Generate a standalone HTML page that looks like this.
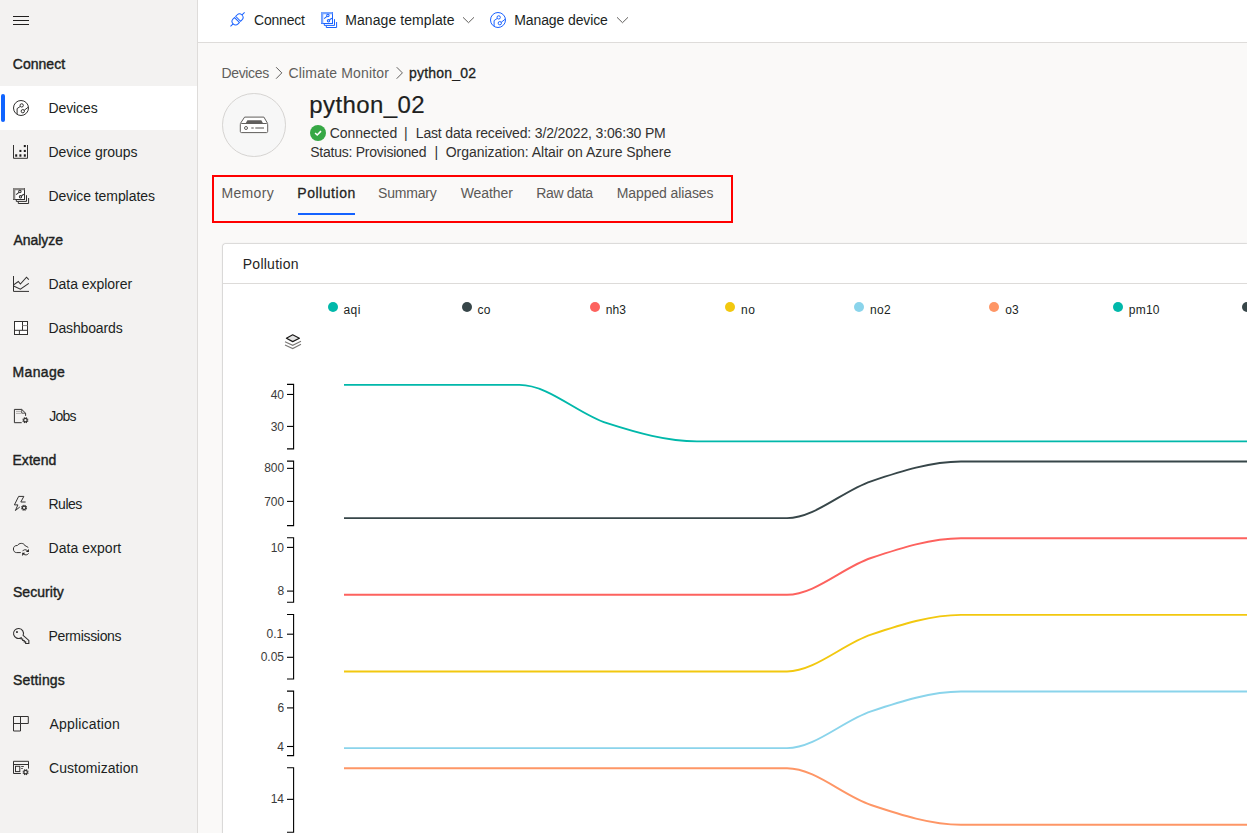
<!DOCTYPE html><html lang="en"><head><meta charset="utf-8"><title>python_02 - Pollution</title><style>

html,body{margin:0;padding:0}
html{width:1247px;height:833px;overflow:hidden}
body{width:1247px;height:833px;overflow:hidden;position:relative;background:#faf9f8;font-family:"Liberation Sans",sans-serif;color:#201f1e}
.abs{position:absolute}
.t{position:absolute;white-space:nowrap;line-height:20px;height:20px}
#side{position:absolute;left:0;top:0;width:197px;height:833px;background:#f3f2f1;border-right:1px solid #dedcda}
#top{position:absolute;left:198px;top:0;width:1049px;height:42px;background:#fff;border-bottom:1px solid #dedcda}
.sb{color:#201f1e;-webkit-text-stroke:0.4px #201f1e}
.nav{color:#201f1e}
.cmd{color:#201f1e}
.bc{color:#605e5c}
.bcb{color:#201f1e;-webkit-text-stroke:0.3px #201f1e}
.title{color:#201f1e;-webkit-text-stroke:0.2px #201f1e;line-height:32px;height:32px}
.bar{color:#323130}
.st{color:#323130}
.tab{color:#5a5856}
.tabsel{color:#252423;-webkit-text-stroke:0.28px #252423}
.cardh{color:#252423}
.leg{color:#201f1e}
.tick{color:#3b3a39}
#sel{position:absolute;left:0;top:86px;width:197px;height:44px;background:#fff}
#selbar{position:absolute;left:1px;top:94px;width:4px;height:28px;border-radius:2px;background:#1064ff}
#card{position:absolute;left:223px;top:244px;width:1024px;height:589px;background:#fff;border-radius:2px 0 0 0;box-shadow:0 0 0 .6px rgba(0,0,0,.10),0 .3px 1.8px rgba(0,0,0,.30)}
#cardhr{position:absolute;left:223px;top:283px;width:1024px;height:1px;background:#dddbd9}
#red{position:absolute;left:212px;top:175px;width:517px;height:44px;border:2px solid #ff0000}
#tabul{position:absolute;left:298px;top:213px;width:57px;height:2px;background:#1462ff}
#avatar{position:absolute;left:222.3px;top:93.2px;width:63.6px;height:63.6px;border-radius:50%;background:#f7f7f7;border:1px solid #d6d4d2;box-sizing:border-box}
.dot{position:absolute;width:10px;height:10px;border-radius:50%}
svg{position:absolute;left:0;top:0;overflow:hidden}
.lt{stroke:var(--lt)}

</style></head><body>
<div id="side"></div><div id="sel"></div><div id="selbar"></div><div id="top"></div>
<div id="avatar"></div><div id="red"></div><div id="tabul"></div><div id="card"></div><div id="cardhr"></div>
<div class="dot" style="left:328.0px;top:302.3px;background:#01b8aa"></div>
<div class="dot" style="left:461.7px;top:302.3px;background:#374649"></div>
<div class="dot" style="left:590.1px;top:302.3px;background:#fd625e"></div>
<div class="dot" style="left:725.0px;top:302.3px;background:#f2c80f"></div>
<div class="dot" style="left:853.9px;top:302.3px;background:#8ad4eb"></div>
<div class="dot" style="left:988.9px;top:302.3px;background:#fe9666"></div>
<div class="dot" style="left:1113.0px;top:302.3px;background:#01b8aa"></div>
<div class="dot" style="left:1242px;top:302.3px;width:5px;border-radius:5px 0 0 5px;background:#374649"></div>
<svg id="chart" width="1247" height="833" viewBox="0 0 1247 833">
<g fill="none" stroke="#000" stroke-width="1.1">
<path d="M287,384.40H293.6V448.90H287"/>
<path d="M287,394.45H293.6"/>
<path d="M287,426.40H293.6"/>
<path d="M287,461.08H293.6V525.58H287"/>
<path d="M287,468.35H293.6"/>
<path d="M287,501.40H293.6"/>
<path d="M287,537.76H293.6V602.26H287"/>
<path d="M287,547.40H293.6"/>
<path d="M287,591.10H293.6"/>
<path d="M287,614.44H293.6V678.94H287"/>
<path d="M287,634.20H293.6"/>
<path d="M287,657.30H293.6"/>
<path d="M287,691.12H293.6V755.62H287"/>
<path d="M287,707.90H293.6"/>
<path d="M287,746.50H293.6"/>
<path d="M287,767.80H293.6V832.30H287"/>
<path d="M287,799.35H293.6"/>
</g><g fill="none" stroke-width="1.9" stroke-linejoin="round">
<path stroke="#01b8aa" d="M344.00,384.85C402.50,384.85,461.00,384.85,519.50,384.85C548.67,384.85,577.83,413.81,607.00,423.20C637.00,432.86,667.00,441.40,697.00,441.40C898.00,441.40,1099.00,441.40,1300.00,441.40"/>
<path stroke="#374649" d="M344.00,518.08C491.67,518.08,639.33,518.08,787.00,518.08C815.00,518.08,843.00,490.63,871.00,481.32C901.00,471.35,931.00,461.53,961.00,461.53C1074.00,461.53,1187.00,461.53,1300.00,461.53"/>
<path stroke="#fd625e" d="M344.00,594.76C491.67,594.76,639.33,594.76,787.00,594.76C815.00,594.76,843.00,567.31,871.00,558.00C901.00,548.03,931.00,538.21,961.00,538.21C1074.00,538.21,1187.00,538.21,1300.00,538.21"/>
<path stroke="#f2c80f" d="M344.00,671.44C491.67,671.44,639.33,671.44,787.00,671.44C815.00,671.44,843.00,643.99,871.00,634.68C901.00,624.71,931.00,614.89,961.00,614.89C1074.00,614.89,1187.00,614.89,1300.00,614.89"/>
<path stroke="#8ad4eb" d="M344.00,748.12C491.67,748.12,639.33,748.12,787.00,748.12C815.00,748.12,843.00,720.67,871.00,711.36C901.00,701.39,931.00,691.57,961.00,691.57C1074.00,691.57,1187.00,691.57,1300.00,691.57"/>
<path stroke="#fe9666" d="M344.00,768.25C491.67,768.25,639.33,768.25,787.00,768.25C815.00,768.25,843.00,795.70,871.00,805.01C901.00,814.98,931.00,824.80,961.00,824.80C1074.00,824.80,1187.00,824.80,1300.00,824.80"/>
</g></svg>
<svg id="icons" width="1247" height="833" viewBox="0 0 1247 833" fill="none" stroke-linecap="butt">

<!-- hamburger -->
<path d="M13,16.5H29M13,20.5H29M13,24.5H29" stroke="#201f1e" stroke-width="1"/>
<g stroke="#323130" stroke-width="1">
<g><circle cx="21" cy="108" r="7.5"/><circle cx="21.7" cy="105.4" r="1.65"/><path d="M20.3,106.4L17.1,108.6V114"/><circle cx="22.8" cy="111.2" r="1.65"/><path d="M24.2,110.3L28.2,107.2"/></g>
<!-- device groups -->
<path d="M13.5,145V158.3H27.5V145"/>
<g fill="#201f1e" stroke="none"><rect x="15.2" y="154.3" width="2" height="2.4"/><rect x="19.4" y="154.3" width="2" height="2.4"/><rect x="23.8" y="154.3" width="2" height="2.4"/><rect x="19.4" y="149.9" width="2" height="2.1"/><rect x="23.8" y="149.9" width="2" height="2.1"/><rect x="23.8" y="145" width="2" height="2.1"/></g>
<!-- device templates -->
<g id="tplside" style="--lt:#8a8886"><g><path d="M26.5,195.2V201.4H16.3V200M28.6,198V203.5H18.3V201.8"/><rect x="13.5" y="188.5" width="11" height="11" fill="#fff"/><path class="lt" d="M14.2,199.5V189.2H24.5" stroke-width="2.2"/><circle cx="19.9" cy="191.5" r="1.2" stroke-width="1.05"/><path d="M19,192.4L16.1,194.7M21.5,195.8L23.9,194.2" stroke-width="1.05"/><circle cx="20.5" cy="196.8" r="1.2" stroke-width="1.05"/></g></g>
<!-- data explorer -->
<path d="M13.5,276V291.4H29"/><path d="M13.6,284.9L18.3,281.5L20.4,284L26.5,277.2L28.8,279.6M13.6,285.9L20.4,289.2L28.8,283.4" stroke-width="1.1"/>
<!-- dashboards -->
<rect x="14.5" y="321.5" width="13" height="13" fill="#fff"/><path d="M22.5,321.5V330.3M14.5,330.3H27.5M19.4,330.3V334.5"/><path d="M22.5,325.6H27.5" stroke="#8a8886"/>
<!-- jobs -->
<path d="M21.7,422.7H14.4V409.4H21.7L25.6,413.2V415.9" /><path d="M21.7,409.4V413.2H25.6" stroke-width=".8"/><path d="M16,411.4H21M16,413.4H21" stroke="#a19f9d" stroke-width=".8"/>
<g transform="translate(25.4,420.2)"><circle r="1.75" stroke-width="1.2"/><path d="M1.85,0.77L2.82,1.17M0.77,1.85L1.17,2.82M-0.77,1.85L-1.17,2.82M-1.85,0.77L-2.82,1.17M-1.85,-0.77L-2.82,-1.17M-0.77,-1.85L-1.17,-2.82M0.77,-1.85L1.17,-2.82M1.85,-0.77L2.82,-1.17" stroke-width="1.15"/></g>
<!-- rules -->
<path d="M25.6,502H20.8L23.85,496.4H18.65L14.4,504.9H17.9L15.4,510.5L19.8,507" stroke-width="1" stroke-linejoin="miter"/>
<g transform="translate(24.1,507.8)"><circle r="1.75" stroke-width="1.2"/><path d="M1.85,0.77L2.82,1.17M0.77,1.85L1.17,2.82M-0.77,1.85L-1.17,2.82M-1.85,0.77L-2.82,1.17M-1.85,-0.77L-2.82,-1.17M-0.77,-1.85L-1.17,-2.82M0.77,-1.85L1.17,-2.82M1.85,-0.77L2.82,-1.17" stroke-width="1.15"/></g>
<!-- data export -->
<path d="M20.8,552.6H16.6C14.6,552.6 13.4,551 13.4,549C13.4,546.8 15,545.3 17.4,545.5C18.2,544.2 19.6,543.4 21.4,543.4C23.4,543.4 24.6,544.6 25.4,546C26.4,546.3 27.4,546.8 28.3,547.5"/>
<path d="M22.5,551.2C23.4,549.6 25.8,549.2 27.4,550.6M28.6,553.4C27.6,555 25.2,555.4 23.6,554.2"/><path d="M28.9,548.9V552.1H25.9ZM22.2,556V552.8H25.2Z" fill="#201f1e" stroke="none"/>
<!-- permissions -->
<rect x="16.1" y="631.2" width="1.7" height="1.7" fill="#201f1e" stroke="none"/>
<path d="M23.11,635.44A5,5 0 1 0 21.2,637.7V639H22.7V640.45H24.2V641.9H25.65V643.5H28.85V640.4Z" stroke-width="1.1" stroke-linejoin="miter"/>
<!-- application -->
<path d="M13.5,716.5H28.3V723.5H20.5V731H13.5ZM20.5,716.5V723.5M13.5,723.5H20.5"/>
<!-- customization -->
<path d="M20.8,773.5H13.5V761.3H28.5V768.6M13.5,764.5H28.5"/><rect x="15.5" y="766.3" width="4.3" height="5.3"/><path d="M21.2,766.5H23.8M21.2,768.5H22.8" stroke-width=".9"/>
<g transform="translate(25.6,772.2)"><circle r="1.75" stroke-width="1.2"/><path d="M1.85,0.77L2.82,1.17M0.77,1.85L1.17,2.82M-0.77,1.85L-1.17,2.82M-1.85,0.77L-2.82,1.17M-1.85,-0.77L-2.82,-1.17M-0.77,-1.85L-1.17,-2.82M0.77,-1.85L1.17,-2.82M1.85,-0.77L2.82,-1.17" stroke-width="1.15"/></g>
</g>
<!-- command bar icons -->
<g stroke="#1a62ff" stroke-width="1">
<g transform="translate(237.55,19.4) rotate(-45)"><path d="M-10,0H-6.3M6.3,0H10"/><path d="M-.85,-3.5H-2.75A3.5,3.5 0 0 0 -2.75,3.5H-.85ZM.85,-3.5H2.75A3.5,3.5 0 0 1 2.75,3.5H.85Z"/></g>
<g id="tpltop" transform="translate(308,-176)" style="--lt:#7aa6ff"><g><path d="M26.5,195.2V201.4H16.3V200M28.6,198V203.5H18.3V201.8"/><rect x="13.5" y="188.5" width="11" height="11" fill="#fff"/><path class="lt" d="M14.2,199.5V189.2H24.5" stroke-width="2.2"/><circle cx="19.9" cy="191.5" r="1.2" stroke-width="1.05"/><path d="M19,192.4L16.1,194.7M21.5,195.8L23.9,194.2" stroke-width="1.05"/><circle cx="20.5" cy="196.8" r="1.2" stroke-width="1.05"/></g></g>
<g transform="translate(477,-88)"><circle cx="21" cy="108" r="7.5"/><circle cx="21.7" cy="105.4" r="1.65"/><path d="M20.3,106.4L17.1,108.6V114"/><circle cx="22.8" cy="111.2" r="1.65"/><path d="M24.2,110.3L28.2,107.2"/></g>
</g>
<g stroke="#605e5c" stroke-width="1"><path d="M463,17.3L468.5,22.7L474,17.3M617,17.3L622.5,22.7L628,17.3"/><path d="M276.1,67.2L281.8,72.9L276.1,78.7M396.7,67.2L402.4,72.9L396.7,78.7"/></g>
<!-- avatar device glyph -->
<g stroke="#605e5c" stroke-width="1"><path d="M240.3,123.6L244.6,117.1H263.9L267.7,123.6" fill="#fff"/><path d="M245.7,123.2L247.4,120.3H261.3L263,123.2Z" fill="#605e5c" stroke="none"/><rect x="240.3" y="123.5" width="27.4" height="9.1" rx="1.2" fill="#fff"/><circle cx="246" cy="128" r="1.5"/><path d="M251.3,128H253.7M255.3,128H264" stroke="#8a8886" stroke-width="1.5"/></g>
<!-- status check -->
<circle cx="318" cy="133" r="8" fill="#36a845"/><path d="M315.1,133L317.2,135L321,131.1" stroke="#fff" stroke-width="1.6"/>
<!-- layers -->
<path d="M292.7,334.8L299.4,338.3L292.7,341.6L286.4,338.3Z" fill="#e4e4e4" stroke="#1b1a19" stroke-width="1.2" stroke-linejoin="round"/><path d="M285,341.7L292.7,345.3L301,341.3M285,345.1L292.7,348.6L301,344.3" stroke="#7a7876" stroke-width="1.1"/>
</svg>

<span class="t sb" id="t0" style="left:12.75px;top:54.00px;font-size:14px;letter-spacing:0.033px;">Connect</span>
<span class="t sb" id="t1" style="left:13.50px;top:230.00px;font-size:14px;letter-spacing:-0.058px;">Analyze</span>
<span class="t sb" id="t2" style="left:12.50px;top:362.00px;font-size:14px;letter-spacing:0.350px;">Manage</span>
<span class="t sb" id="t3" style="left:12.50px;top:450.00px;font-size:14px;letter-spacing:0.030px;">Extend</span>
<span class="t sb" id="t4" style="left:13.00px;top:582.00px;font-size:14px;letter-spacing:0.036px;">Security</span>
<span class="t sb" id="t5" style="left:13.00px;top:670.00px;font-size:14px;letter-spacing:0.179px;">Settings</span>
<span class="t nav" id="t6" style="left:48.50px;top:98.00px;font-size:14px;letter-spacing:-0.108px;">Devices</span>
<span class="t nav" id="t7" style="left:48.50px;top:142.00px;font-size:14px;letter-spacing:-0.033px;">Device groups</span>
<span class="t nav" id="t8" style="left:48.50px;top:186.00px;font-size:14px;letter-spacing:-0.063px;">Device templates</span>
<span class="t nav" id="t9" style="left:48.50px;top:274.00px;font-size:14px;letter-spacing:-0.033px;">Data explorer</span>
<span class="t nav" id="t10" style="left:48.50px;top:318.00px;font-size:14px;letter-spacing:-0.150px;">Dashboards</span>
<span class="t nav" id="t11" style="left:49.25px;top:406.00px;font-size:14px;letter-spacing:-0.750px;">Jobs</span>
<span class="t nav" id="t12" style="left:48.50px;top:494.00px;font-size:14px;letter-spacing:-0.488px;">Rules</span>
<span class="t nav" id="t13" style="left:48.50px;top:538.00px;font-size:14px;letter-spacing:0.035px;">Data export</span>
<span class="t nav" id="t14" style="left:48.50px;top:626.00px;font-size:14px;letter-spacing:-0.315px;">Permissions</span>
<span class="t nav" id="t15" style="left:49.50px;top:714.00px;font-size:14px;letter-spacing:0.180px;">Application</span>
<span class="t nav" id="t16" style="left:49.00px;top:758.00px;font-size:14px;letter-spacing:0.046px;">Customization</span>
<span class="t cmd" id="t17" style="left:254.00px;top:10.00px;font-size:14px;letter-spacing:-0.208px;">Connect</span>
<span class="t cmd" id="t18" style="left:345.25px;top:10.00px;font-size:14px;letter-spacing:0.079px;">Manage template</span>
<span class="t cmd" id="t19" style="left:514.25px;top:10.00px;font-size:14px;letter-spacing:-0.108px;">Manage device</span>
<span class="t bc" id="t20" style="left:221.50px;top:63.00px;font-size:14px;letter-spacing:-0.358px;">Devices</span>
<span class="t bc" id="t21" style="left:288.50px;top:63.00px;font-size:14px;letter-spacing:0.171px;">Climate Monitor</span>
<span class="t bcb" id="t22" style="left:409.00px;top:63.00px;font-size:14px;letter-spacing:0.200px;">python_02</span>
<span class="t title" id="t23" style="left:309.25px;top:88.50px;font-size:24px;letter-spacing:0.394px;">python_02</span>
<span class="t st" id="t24" style="left:329.75px;top:123.00px;font-size:14px;letter-spacing:-0.037px;">Connected</span>
<span class="t bar" id="t25" style="left:404.00px;top:123.00px;font-size:14px;">|</span>
<span class="t st" id="t26" style="left:415.75px;top:123.00px;font-size:14px;letter-spacing:-0.156px;">Last data received: 3/2/2022, 3:06:30 PM</span>
<span class="t st" id="t27" style="left:310.25px;top:142.00px;font-size:14px;letter-spacing:-0.247px;">Status: Provisioned</span>
<span class="t bar" id="t28" style="left:434.50px;top:142.00px;font-size:14px;">|</span>
<span class="t st" id="t29" style="left:445.75px;top:142.00px;font-size:14px;letter-spacing:-0.027px;">Organization: Altair on Azure Sphere</span>
<span class="t tab" id="t30" style="left:221.50px;top:183.00px;font-size:14px;letter-spacing:0.330px;">Memory</span>
<span class="t tabsel" id="t31" style="left:297.25px;top:183.00px;font-size:14px;letter-spacing:0.544px;">Pollution</span>
<span class="t tab" id="t32" style="left:378.00px;top:183.00px;font-size:14px;letter-spacing:-0.183px;">Summary</span>
<span class="t tab" id="t33" style="left:460.75px;top:183.00px;font-size:14px;letter-spacing:-0.092px;">Weather</span>
<span class="t tab" id="t34" style="left:536.25px;top:183.00px;font-size:14px;letter-spacing:-0.329px;">Raw data</span>
<span class="t tab" id="t35" style="left:616.75px;top:183.00px;font-size:14px;letter-spacing:-0.096px;">Mapped aliases</span>
<span class="t cardh" id="t36" style="left:242.75px;top:254.00px;font-size:14px;letter-spacing:0.256px;">Pollution</span>
<span class="t leg" id="t37" style="left:343.50px;top:300.00px;font-size:12px;letter-spacing:0.425px;">aqi</span>
<span class="t leg" id="t38" style="left:477.50px;top:300.00px;font-size:12px;letter-spacing:0.250px;">co</span>
<span class="t leg" id="t39" style="left:605.75px;top:300.00px;font-size:12px;letter-spacing:0.125px;">nh3</span>
<span class="t leg" id="t40" style="left:741.00px;top:300.00px;font-size:12px;letter-spacing:0.700px;">no</span>
<span class="t leg" id="t41" style="left:870.00px;top:300.00px;font-size:12px;letter-spacing:0.275px;">no2</span>
<span class="t leg" id="t42" style="left:1005.25px;top:300.00px;font-size:12px;letter-spacing:0.200px;">o3</span>
<span class="t leg" id="t43" style="left:1128.75px;top:300.00px;font-size:12px;letter-spacing:0.233px;">pm10</span>
<span class="t tick" id="t44" style="left:270.65px;top:384.55px;font-size:12px;">40</span>
<span class="t tick" id="t45" style="left:270.65px;top:416.50px;font-size:12px;">30</span>
<span class="t tick" id="t46" style="left:264.15px;top:458.45px;font-size:12px;">800</span>
<span class="t tick" id="t47" style="left:264.15px;top:491.50px;font-size:12px;">700</span>
<span class="t tick" id="t48" style="left:270.65px;top:537.50px;font-size:12px;">10</span>
<span class="t tick" id="t49" style="left:277.40px;top:581.20px;font-size:12px;">8</span>
<span class="t tick" id="t50" style="left:266.55px;top:624.30px;font-size:12px;">0.1</span>
<span class="t tick" id="t51" style="left:260.65px;top:647.40px;font-size:12px;">0.05</span>
<span class="t tick" id="t52" style="left:277.40px;top:698.00px;font-size:12px;">6</span>
<span class="t tick" id="t53" style="left:277.15px;top:736.60px;font-size:12px;">4</span>
<span class="t tick" id="t54" style="left:270.65px;top:789.45px;font-size:12px;">14</span>
</body></html>
